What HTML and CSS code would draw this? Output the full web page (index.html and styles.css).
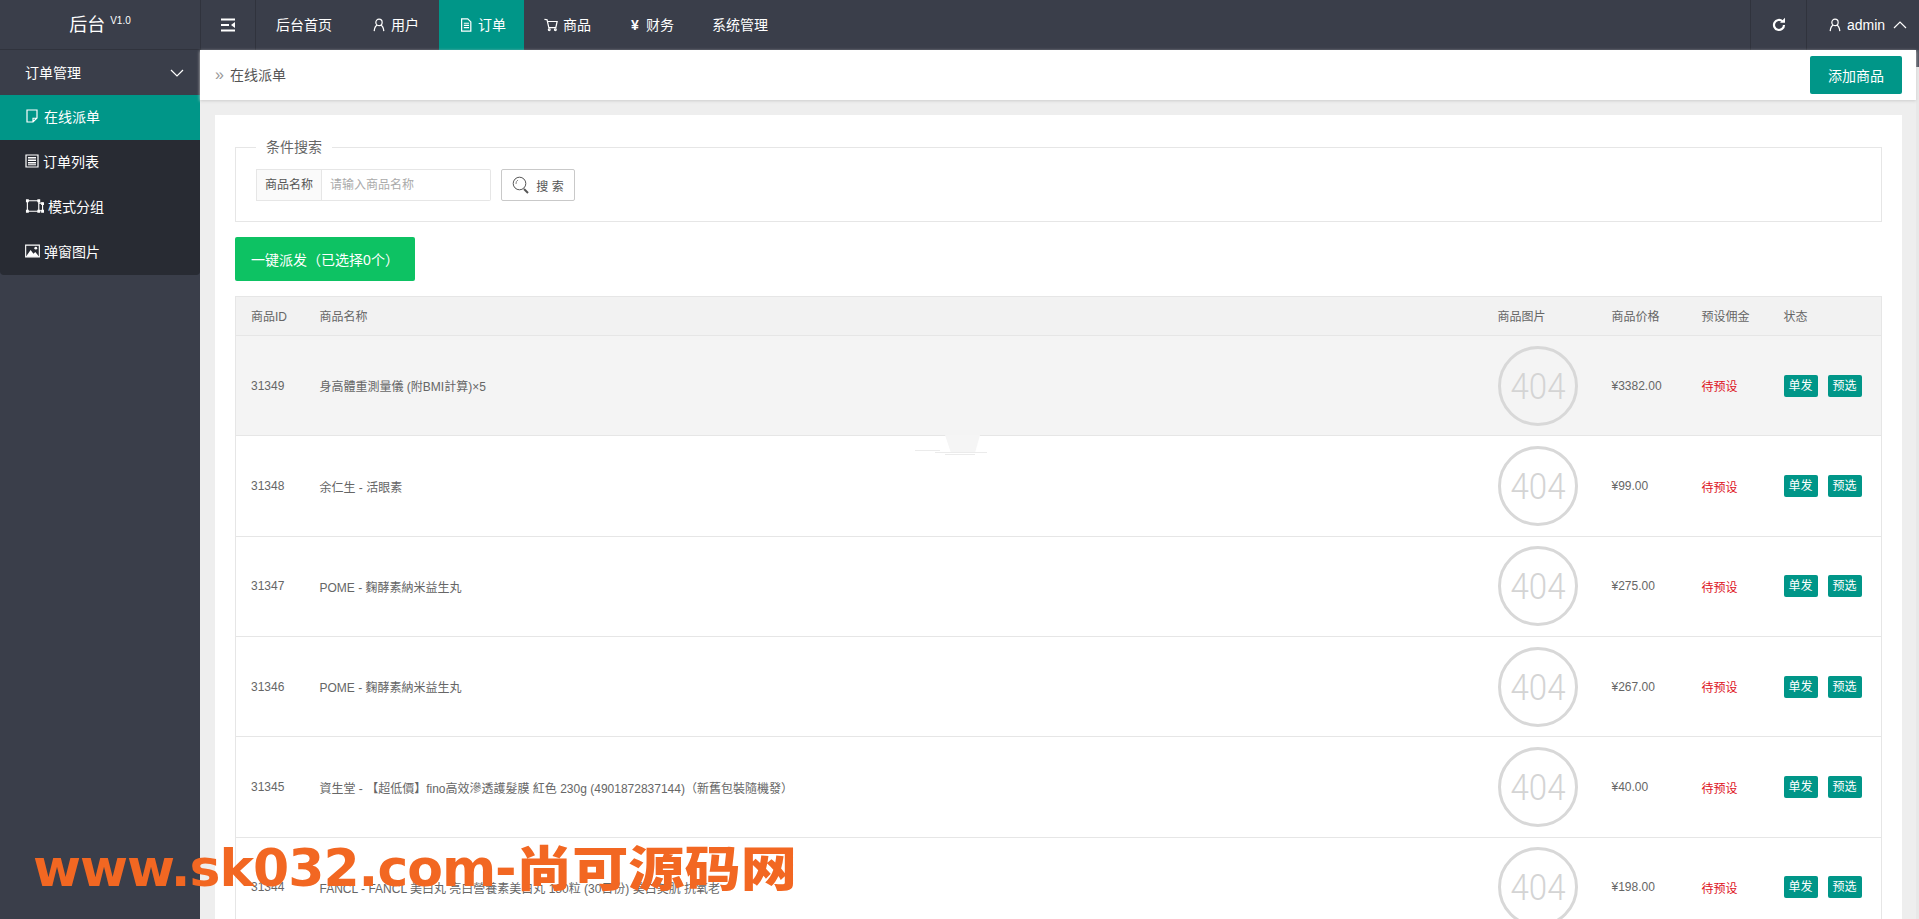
FILE: index.html
```html
<!DOCTYPE html>
<html>
	<head>
		<meta name="viewport" content="width=device-width, initial-scale=1.0">
		<title>后台</title>
		<link rel="stylesheet" href="styles.css">
	</head>
	<body>
	<div class="header">
		<div class="logo">后台<sup>V1.0</sup></div>
		<div class="nav_toggle">
			<svg width="16" height="14" viewBox="0 0 16 14"><path d="M1 1.500h14M1 7h8M1 12.500h14" stroke="#fff" stroke-width="2" fill="none"/><path d="M15 4v6l-4-3z" fill="#fff"/></svg>
		</div>
		<a class="nav_item">后台首页</a>
		<a class="nav_item"><svg class="nav_icon" viewBox="0 0 16 16"><circle cx="8" cy="5" r="3.600"/><path d="M2.500 15c.4-4 2.300-6.400 3.700-6.800M13.500 15c-.4-4-2.300-6.400-3.700-6.800"/></svg>用户</a>
		<a class="nav_item nav_active"><svg class="nav_icon" viewBox="0 0 16 16"><path d="M3 1h7l3.500 3.500V15H3zM5.500 6h6M5.500 8.500h6M5.500 11h6"/></svg>订单</a>
		<a class="nav_item"><svg class="nav_icon" viewBox="0 0 16 16"><path d="M.5 1.500l3 .5 2 9h8l1.500-7H4"/><circle cx="6" cy="13.500" r="1"/><circle cx="13" cy="13.500" r="1"/></svg>商品</a>
		<a class="nav_item nav_money"><span class="yen">¥</span>财务</a>
		<a class="nav_item">系统管理</a>
		<div class="header_right">
			<div class="refresh">
				<svg width="16" height="16" viewBox="0 0 16 16"><path d="M13 8a5 5 0 1 1-1.600-3.700" stroke="#fff" stroke-width="2.200" fill="none"/><path d="M14 .8v5h-5z" fill="#fff"/></svg>
			</div>
			<div class="user_box">
				<svg class="nav_icon" viewBox="0 0 16 16"><circle cx="8" cy="5" r="3.600"/><path d="M2.500 15c.4-4 2.300-6.400 3.700-6.800M13.500 15c-.4-4-2.300-6.400-3.700-6.800"/></svg>
				<span>admin</span>
				<svg class="chevron_up" viewBox="0 0 14 8"><path d="M1 7l6-6 6 6"/></svg>
			</div>
		</div>
	</div>

	<div class="layout">
		<div class="sidebar">
			<div class="side_title">订单管理
				<svg class="chevron_down" viewBox="0 0 14 8"><path d="M1 1l6 6 6-6"/></svg>
			</div>
			<a class="side_item side_active"><svg class="side_icon" viewBox="0 0 14 14"><path d="M2 1h10v8l-4 4H2zM12 9l-4 .2V13" /></svg>在线派单</a>
			<div class="side_group">
				<a class="side_item side_list"><svg class="side_icon" viewBox="0 0 14 14"><path d="M1 1h12v12H1z"/><path class="solid" d="M3 3h8v1.500H3zM3 5.500h8V7H3zM3 8h8v1.500H3zM3 10.300h8v1H3z"/></svg>订单列表</a>
				<a class="side_item side_wide"><svg class="side_icon" viewBox="0 0 20 16"><path d="M2.500 2.500h12v11h-12zM14.500 5h4v8h-4"/><path class="solid" d="M1 1h3v3H1zM13 1h3v3h-3zM1 12h3v3H1zM13 12h3v3h-3zM17 4h3v3h-3zM17 12h3v3h-3z"/></svg>模式分组</a>
				<a class="side_item"><svg class="side_icon side_icon_wide" viewBox="0 0 16 14"><path d="M.7.7h14.600v12.600H.7z"/><path class="solid" d="M1 13l5-7 3 4 2-2 4 5z"/><circle class="solid" cx="11.500" cy="4" r="1.500"/></svg>弹窗图片</a>
			</div>
		</div>

		<div class="main">
			<div class="topbar">
				<div class="crumb"><span class="crumb_arrow">»</span>在线派单</div>
				<button type="button" class="teal_button">添加商品</button>
			</div>
			<div class="content">
				<div class="card">
					<fieldset class="search_box">
						<legend>条件搜索</legend>
						<div class="search_row">
							<label class="search_label">商品名称</label>
							<input type="text" class="search_input" placeholder="请输入商品名称">
							<button type="button" class="search_button">
								<svg width="18" height="18" viewBox="0 0 18 18"><circle cx="7.500" cy="7.500" r="6.300" fill="none" stroke="#555" stroke-width="1"/><path d="M12 13l4 4" stroke="#555" stroke-width="2"/><path d="M4 8a4 4 0 0 1 2-4" stroke="#888" fill="none"/></svg>
								<span>搜 索</span>
							</button>
						</div>
					</fieldset>

					<button type="button" class="green_button">一键派发（已选择0个）</button>

					<table class="goods_table">
						<colgroup>
							<col class="col_id"><col><col class="col_img"><col class="col_price"><col class="col_fee"><col class="col_state">
						</colgroup>
						<thead>
							<tr><th>商品ID</th><th>商品名称</th><th>商品图片</th><th>商品价格</th><th>预设佣金</th><th>状态</th></tr>
						</thead>
						<tbody id="goods_rows">
							<tr class="row_hover">
								<td>31349</td><td>身高體重測量儀 (附BMI計算)×5</td>
								<td><svg class="img_404" viewBox="0 0 80 80"><circle cx="40" cy="40" r="38.500"/><text x="40" y="53" textLength="55" lengthAdjust="spacingAndGlyphs">404</text></svg></td>
								<td>¥3382.00</td><td class="fee">待预设</td>
								<td><a class="mini_button">单发</a><a class="mini_button">预选</a></td>
							</tr>
							<tr>
								<td>31348</td><td>余仁生 - 活眼素</td>
								<td><svg class="img_404" viewBox="0 0 80 80"><circle cx="40" cy="40" r="38.500"/><text x="40" y="53" textLength="55" lengthAdjust="spacingAndGlyphs">404</text></svg></td>
								<td>¥99.00</td><td class="fee">待预设</td>
								<td><a class="mini_button">单发</a><a class="mini_button">预选</a></td>
							</tr>
							<tr>
								<td>31347</td><td>POME - 麴酵素納米益生丸</td>
								<td><svg class="img_404" viewBox="0 0 80 80"><circle cx="40" cy="40" r="38.500"/><text x="40" y="53" textLength="55" lengthAdjust="spacingAndGlyphs">404</text></svg></td>
								<td>¥275.00</td><td class="fee">待预设</td>
								<td><a class="mini_button">单发</a><a class="mini_button">预选</a></td>
							</tr>
							<tr>
								<td>31346</td><td>POME - 麴酵素納米益生丸</td>
								<td><svg class="img_404" viewBox="0 0 80 80"><circle cx="40" cy="40" r="38.500"/><text x="40" y="53" textLength="55" lengthAdjust="spacingAndGlyphs">404</text></svg></td>
								<td>¥267.00</td><td class="fee">待预设</td>
								<td><a class="mini_button">单发</a><a class="mini_button">预选</a></td>
							</tr>
							<tr>
								<td>31345</td><td>資生堂 - 【超低價】fino高效滲透護髮膜 紅色 230g (4901872837144)（新舊包裝隨機發）</td>
								<td><svg class="img_404" viewBox="0 0 80 80"><circle cx="40" cy="40" r="38.500"/><text x="40" y="53" textLength="55" lengthAdjust="spacingAndGlyphs">404</text></svg></td>
								<td>¥40.00</td><td class="fee">待预设</td>
								<td><a class="mini_button">单发</a><a class="mini_button">预选</a></td>
							</tr>
							<tr>
								<td>31344</td><td>FANCL - FANCL 美白丸 亮白營養素美白丸 180粒 (30日份) 美白美肌 抗氧老</td>
								<td><svg class="img_404" viewBox="0 0 80 80"><circle cx="40" cy="40" r="38.500"/><text x="40" y="53" textLength="55" lengthAdjust="spacingAndGlyphs">404</text></svg></td>
								<td>¥198.00</td><td class="fee">待预设</td>
								<td><a class="mini_button">单发</a><a class="mini_button">预选</a></td>
							</tr>
						</tbody>
					</table>
				</div>
			</div>
		</div>
		<div class="rail"><div class="rail_thumb"></div></div>
	</div>

	<!-- stuck tooltip left over the table -->
	<svg class="smudge" width="75" height="21" viewBox="0 0 75 21"><path d="M30 0h35l-5 18H36z" fill="#f5f5f5"/><path d="M0 15.500h25M20 17.500h52M30 19.500h30" stroke="#ebebeb" stroke-width="1"/></svg>

	<div class="watermark">www.sk032.com-<span class="watermark_cn">尚可源码网</span></div>
	</body>
</html>
```

FILE: styles.css
```css
html, body
{
	margin: 0;
	height: 100%;
	overflow: hidden;
}
body
{
	font-family: "Liberation Sans", "Noto Sans CJK SC", sans-serif;
	font-size: 14px;
	color: #666;
	background: #eee;
}
a
{
	text-decoration: none;
	color: inherit;
}

/* top bar */
.header
{
	display: flex;
	height: 50px;
	background: #3a3e4a;
	color: #fff;
	line-height: 50px;
}
.logo
{
	box-sizing: border-box;
	width: 201px;
	text-align: center;
	font-size: 18px;
	border-right: 1px solid #30333d;
	border-bottom: 1px solid #30333d;
	flex: none;
}
.logo sup
{
	font-size: 10px;
	margin-left: 5px;
	line-height: 0;
	vertical-align: 7px;
}
.nav_toggle
{
	box-sizing: border-box;
	width: 55px;
	display: flex;
	align-items: center;
	justify-content: center;
	border-right: 1px solid #30333d;
	flex: none;
}
.nav_item
{
	display: flex;
	align-items: center;
	padding: 0 20px;
	color: #fff;
	flex: none;
}
.nav_active
{
	background: #009688;
	padding: 0 18px 0 20px;
}
.nav_money
{
	padding-right: 18px;
}
.nav_icon
{
	width: 14px;
	height: 16px;
	margin-right: 5px;
	fill: none;
	stroke: #fff;
	stroke-width: 1.400;
}
.yen
{
	font-weight: bold;
	width: 15px;
}
.header_right
{
	margin-left: auto;
	display: flex;
}
.refresh
{
	width: 55px;
	display: flex;
	align-items: center;
	justify-content: center;
	border-left: 1px solid #30333d;
	border-right: 1px solid #30333d;
}
.user_box
{
	display: flex;
	align-items: center;
	width: 112px;
	box-sizing: border-box;
	padding-left: 21px;
}
.chevron_up
{
	width: 14px;
	height: 8px;
	margin-left: 8px;
	fill: none;
	stroke: #fff;
	stroke-width: 1.200;
}

/* left menu */
.layout
{
	display: flex;
	height: 869px;
}
.sidebar
{
	width: 200px;
	flex: none;
	background: #3a3e4a;
	color: #fff;
}
.side_title
{
	display: flex;
	align-items: center;
	justify-content: space-between;
	box-sizing: border-box;
	height: 45px;
	padding: 0 16px 2px 25px;
}
.chevron_down
{
	width: 14px;
	height: 8px;
	margin-top: 2px;
	fill: none;
	stroke: #fff;
	stroke-width: 1.200;
}
.side_item
{
	display: flex;
	align-items: center;
	box-sizing: border-box;
	height: 45px;
	padding: 0 0 3px 25px;
	color: #fff;
}
.side_active
{
	background: #009688;
}
.side_group
{
	background: #282b33;
	border-radius: 0 0 4px 4px;
}
.side_icon
{
	width: 14px;
	height: 14px;
	margin-right: 5px;
	fill: none;
	stroke: #fff;
	stroke-width: 1.200;
}
.side_list .side_icon
{
	margin-right: 4px;
}
.side_wide .side_icon
{
	width: 19px;
	height: 16px;
	margin-right: 4px;
}
.side_icon_wide
{
	width: 15px;
	margin-right: 4px;
}
.side_icon .solid
{
	fill: #fff;
	stroke: none;
}

/* content */
.main
{
	flex: 1;
	min-width: 0;
	display: flex;
	flex-direction: column;
	position: relative;
}
.topbar
{
	display: flex;
	align-items: center;
	justify-content: space-between;
	height: 50px;
	flex: none;
	background: #fff;
	box-shadow: 0 1px 3px #ccc;
	padding: 0 14px 0 15px;
	position: relative;
}
.crumb
{
	color: #555;
	margin-top: -2px;
}
.crumb_arrow
{
	color: #999;
	font-size: 16px;
	margin-right: 6px;
}
.teal_button
{
	height: 38px;
	width: 92px;
	border: none;
	border-radius: 2px;
	background: #009688;
	color: #fff;
	font: inherit;
	padding: 0;
}
.content
{
	flex: 1;
	min-height: 0;
	padding: 15px 14px 0 15px;
	overflow: hidden;
}
.card
{
	background: #fff;
	padding: 22px 20px 20px 20px;
}
.search_box
{
	margin: 0;
	border: 1px solid #e6e6e6;
	padding: 12px 20px 20px 20px;
	min-width: 0;
}
.search_box legend
{
	margin-left: 0;
	padding: 0 10px;
	line-height: 20px;
	color: #666;
}
.search_row
{
	display: flex;
	height: 32px;
}
.search_label
{
	box-sizing: border-box;
	width: 66px;
	background: #fafafa;
	border: 1px solid #e6e6e6;
	font-size: 12px;
	line-height: 30px;
	text-align: center;
	color: #555;
}
.search_input
{
	box-sizing: border-box;
	width: 169px;
	border: 1px solid #e6e6e6;
	border-left: none;
	border-radius: 0 2px 2px 0;
	padding: 0 8px;
	font: 12px "Liberation Sans", "Noto Sans CJK SC", sans-serif;
	outline: none;
}
.search_input::placeholder
{
	color: #aaa;
}
.search_button
{
	display: flex;
	align-items: center;
	justify-content: center;
	gap: 6px;
	box-sizing: border-box;
	width: 74px;
	margin-left: 10px;
	background: #fff;
	border: 1px solid #c9c9c9;
	border-radius: 2px;
	color: #555;
	font: 12px "Liberation Sans", "Noto Sans CJK SC", sans-serif;
	padding: 0;
}
.green_button
{
	display: block;
	height: 44px;
	width: 180px;
	margin: 15px 0 15px 0;
	border: none;
	border-radius: 2px;
	background: #0dc263;
	color: #fff;
	font: inherit;
	padding: 0;
}
.goods_table
{
	width: 100%;
	table-layout: fixed;
	border-collapse: collapse;
	border: 1px solid #e6e6e6;
	font-size: 12px;
}
.col_id { width: 69px; }
.col_img { width: 114px; }
.col_price { width: 90px; }
.col_fee { width: 82px; }
.col_state { width: 113px; }
.goods_table th
{
	height: 39px;
	box-sizing: border-box;
	padding: 0 15px 2px 15px;
	background: #f2f2f2;
	font-weight: normal;
	text-align: left;
	color: #666;
	border-bottom: 1px solid #e6e6e6;
}
.goods_table td
{
	height: 100.36px;
	box-sizing: border-box;
	padding: 0 15px;
	color: #666;
	border-bottom: 1px solid #e6e6e6;
	white-space: nowrap;
}
.row_hover td
{
	background: #f4f4f4;
}
.goods_table td.fee
{
	color: #dd1122;
}
.img_404
{
	display: block;
	width: 80px;
	height: 80px;
}
.img_404 circle
{
	fill: none;
	stroke: #d8d8d8;
	stroke-width: 3;
}
.img_404 text
{
	font-family: Roboto, sans-serif;
	font-weight: 300;
	font-size: 36px;
	text-anchor: middle;
	fill: #d4d4d4;
}
.mini_button
{
	display: inline-block;
	width: 34px;
	height: 22px;
	line-height: 22px;
	text-align: center;
	background: #009688;
	color: #fff;
	border-radius: 2px;
	margin-right: 10px;
}
.rail
{
	width: 3px;
	flex: none;
	background: #e8e8e8;
}
.rail_thumb
{
	height: 17px;
	background: #50545f;
}

/* things lying over the page */
.smudge
{
	position: absolute;
	left: 915px;
	top: 435px;
}
.watermark
{
	position: absolute;
	left: 33px;
	top: 833px;
	font-family: "DejaVu Sans", "Noto Sans CJK SC", sans-serif;
	font-weight: bold;
	font-size: 52px;
	letter-spacing: -1px;
	line-height: 70px;
	color: #f26722;
	white-space: nowrap;
}
.watermark_cn
{
	display: inline-block;
	font-weight: 900;
	font-size: 48px;
	letter-spacing: 0;
	transform: scaleX(1.17);
	transform-origin: left center;
}
```
